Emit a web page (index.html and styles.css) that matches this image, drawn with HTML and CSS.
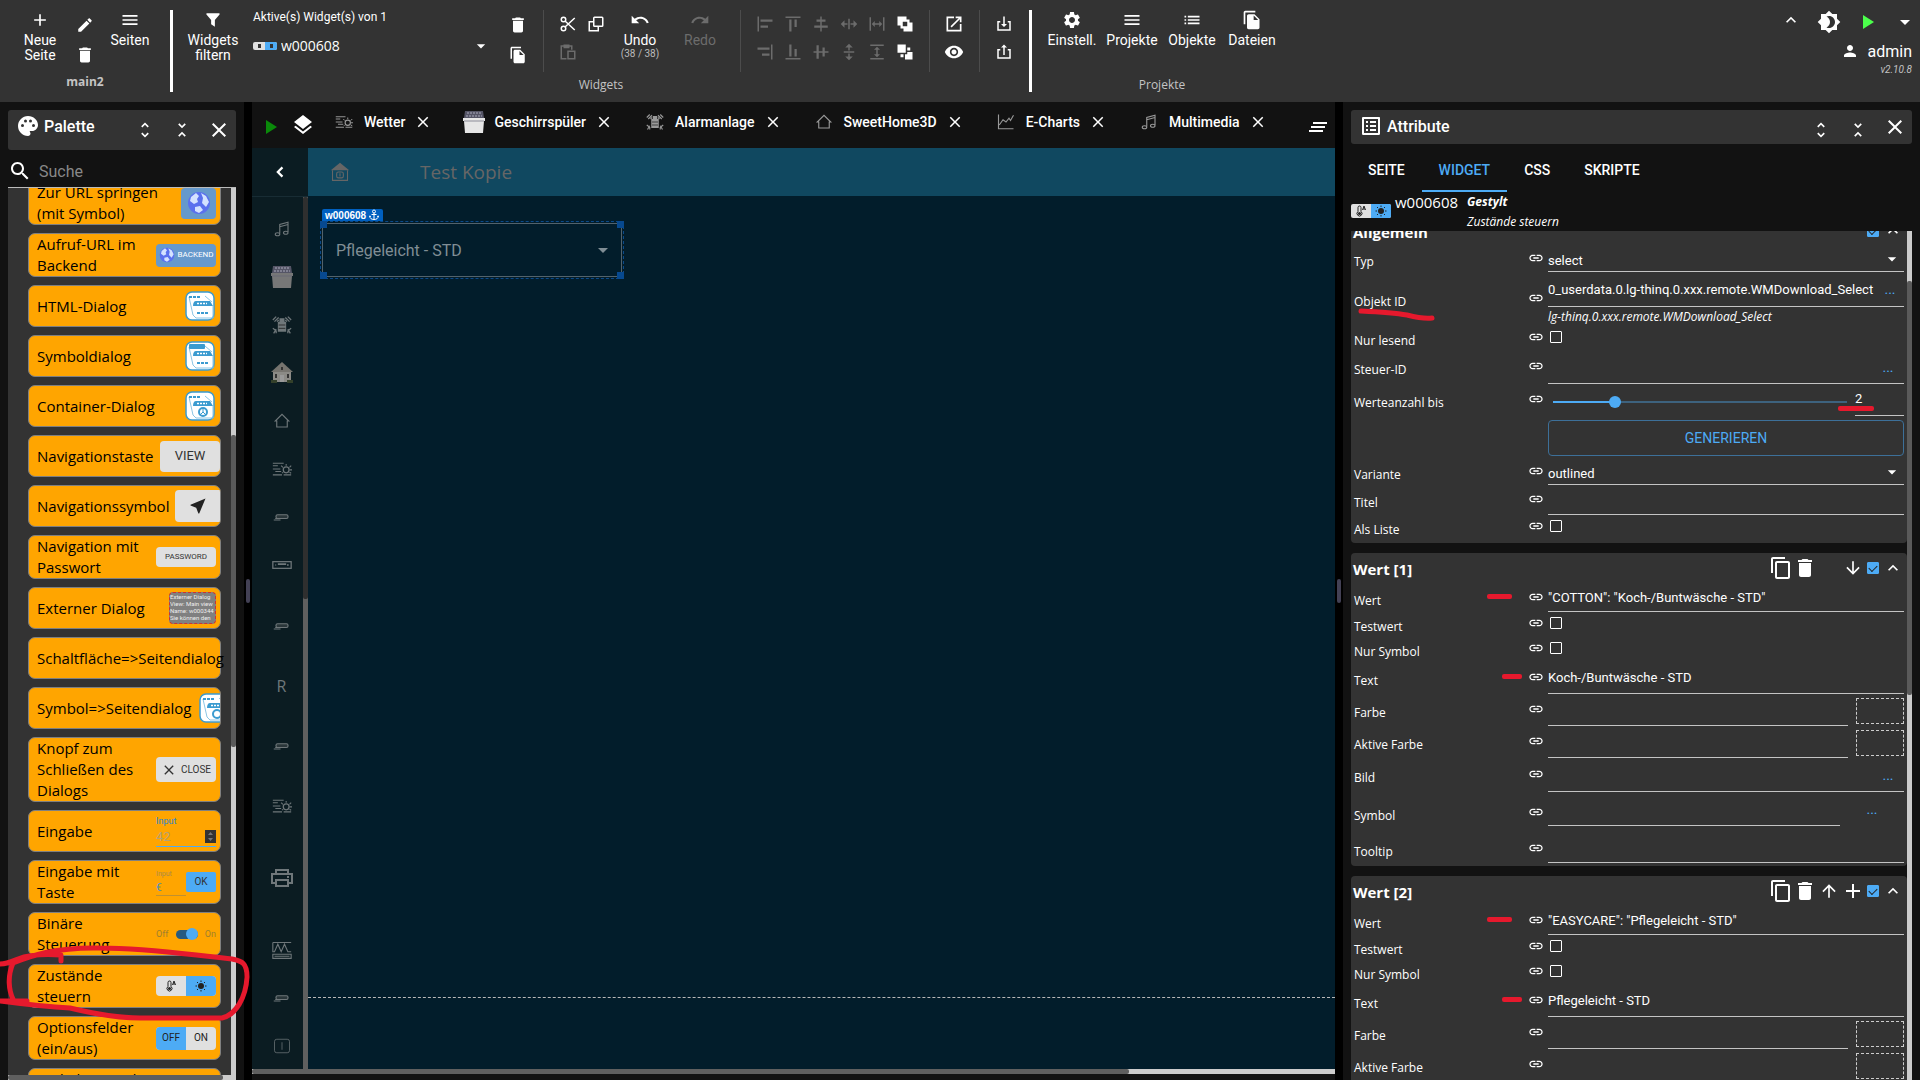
FILE: index.html
```html
<!DOCTYPE html>
<html lang="de">
<head>
<meta charset="utf-8">
<title>main2 – Editor</title>
<link rel="stylesheet" href="styles.css">
</head>
<body>
<svg class="defs" aria-hidden="true">
  <symbol id="add" viewBox="0 0 24 24"><path d="M19 13h-6v6h-2v-6H5v-2h6V5h2v6h6v2z"/></symbol>
  <symbol id="edit" viewBox="0 0 24 24"><path d="M3 17.25V21h3.75L17.81 9.94l-3.75-3.75L3 17.25zM20.71 7.04c.39-.39.39-1.02 0-1.41l-2.34-2.34c-.39-.39-1.02-.39-1.41 0l-1.83 1.83 3.75 3.75 1.83-1.83z"/></symbol>
  <symbol id="delete" viewBox="0 0 24 24"><path d="M6 19c0 1.1.9 2 2 2h8c1.1 0 2-.9 2-2V7H6v12zM19 4h-3.500l-1-1h-5l-1 1H5v2h14V4z"/></symbol>
  <symbol id="menu" viewBox="0 0 24 24"><path d="M3 18h18v-2H3v2zm0-5h18v-2H3v2zm0-7v2h18V6H3z"/></symbol>
  <symbol id="filter" viewBox="0 0 24 24"><path d="M4 3h16c1 0 1.300 1 .700 1.700L14.500 12v9l-5-3.500V12L3.300 4.700C2.700 4 3 3 4 3z"/></symbol>
  <symbol id="files" viewBox="0 0 24 24"><path d="M16 1H4c-1.100 0-2 .900-2 2v14h2V3h12V1zm-1 4l6 6v10c0 1.100-.900 2-2 2H7.990C6.890 23 6 22.100 6 21l.010-14c0-1.100.890-2 1.990-2h7zm-1 7h5.500L14 6.500V12z"/></symbol>
  <symbol id="copy" viewBox="0 0 24 24"><path d="M16 1H4c-1.100 0-2 .900-2 2v14h2V3h12V1zm3 4H8c-1.100 0-2 .900-2 2v14c0 1.100.900 2 2 2h11c1.100 0 2-.900 2-2V7c0-1.100-.900-2-2-2zm0 16H8V7h11v14z"/></symbol>
  <symbol id="cut" viewBox="0 0 24 24"><g fill="none" stroke="currentColor" stroke-width="2"><circle cx="6" cy="6" r="3"/><circle cx="6" cy="18" r="3"/><path d="M8 8l13 12M8 16L21 4"/></g></symbol>
  <symbol id="dup" viewBox="0 0 24 24"><g fill="none" stroke="currentColor" stroke-width="2"><rect x="9" y="3" width="12" height="12" rx="1"/><path d="M9 9H3v12h12v-6"/></g></symbol>
  <symbol id="paste" viewBox="0 0 24 24"><g fill="none" stroke="currentColor" stroke-width="2"><path d="M10 21H3V4h14v5"/><rect x="12" y="11" width="9" height="10"/></g><path d="M6 2h8v5H6z"/></symbol>
  <symbol id="undo" viewBox="0 0 24 24"><path d="M12.500 8c-2.650 0-5.050.990-6.900 2.600L2 7v9h9l-3.620-3.620c1.390-1.160 3.160-1.880 5.120-1.880 3.540 0 6.550 2.310 7.600 5.500l2.370-.780C21.080 11.030 17.150 8 12.500 8z"/></symbol>
  <symbol id="redo" viewBox="0 0 24 24"><path d="M18.400 10.600C16.550 8.990 14.150 8 11.500 8c-4.650 0-8.580 3.030-9.960 7.220L3.900 16c1.050-3.190 4.050-5.500 7.600-5.500 1.950 0 3.730.720 5.120 1.880L13 16h9V7l-3.600 3.600z"/></symbol>
  <symbol id="al-left" viewBox="0 0 24 24"><path d="M2 2h2v20H2zM6 6h16v3H6zM6 14h10v3H6z"/></symbol>
  <symbol id="al-right" viewBox="0 0 24 24"><path d="M20 2h2v20h-2zM2 6h16v3H2zM8 14h10v3H8z"/></symbol>
  <symbol id="al-top" viewBox="0 0 24 24"><path d="M2 2h20v2H2zM7 6h3v16H7zM14 6h3v10h-3z"/></symbol>
  <symbol id="al-bottom" viewBox="0 0 24 24"><path d="M2 20h20v2H2zM7 2h3v16H7zM14 8h3v10h-3z"/></symbol>
  <symbol id="al-mid" viewBox="0 0 24 24"><path d="M11 2h2v4h5v3h-5v5h8v3h-8v5h-2v-5H3v-3h8V9H6V6h5z"/></symbol>
  <symbol id="al-cen" viewBox="0 0 24 24"><path d="M2 11h4V3h3v8h5V6h3v5h5v2h-5v5h-3v-5H9v8H6v-8H2z"/></symbol>
  <symbol id="same-w" viewBox="0 0 24 24"><path d="M11 5h2v14h-2zM1 12l5-5v4h4v2H6v4zM23 12l-5-5v4h-4v2h4v4z"/></symbol>
  <symbol id="same-h" viewBox="0 0 24 24"><path d="M5 11h14v2H5zM12 1l5 5h-4v4h-2V6H7zM12 23l5-5h-4v-4h-2v4H7z"/></symbol>
  <symbol id="dist-w" viewBox="0 0 24 24"><path d="M2 3h2v18H2zM20 3h2v18h-2zM5 12l4-4v3h6V8l4 4-4 4v-3H9v3z"/></symbol>
  <symbol id="dist-h" viewBox="0 0 24 24"><path d="M3 2h18v2H3zM3 20h18v2H3zM12 5l4 4h-3v6h3l-4 4-4-4h3V9H8z"/></symbol>
  <symbol id="front" viewBox="0 0 24 24"><path d="M2 2h12v4h4v4h4v12H10v-4H6v-4H2zM9 9v6h6V9z" fill-rule="evenodd"/></symbol>
  <symbol id="back" viewBox="0 0 24 24"><path d="M2 2h11v11H2zM15 6h4v4h-4zM6 15h4v4H6zM12 15h3v-3h7v10H12z"/></symbol>
  <symbol id="open" viewBox="0 0 24 24"><path d="M19 19H5V5h7V3H3v18h18v-9h-2zM14 3v2h3.600l-9.800 9.800 1.400 1.400L19 6.400V10h2V3z"/></symbol>
  <symbol id="eye" viewBox="0 0 24 24"><path d="M12 4.500C7 4.500 2.730 7.610 1 12c1.730 4.390 6 7.500 11 7.500s9.270-3.110 11-7.500c-1.730-4.390-6-7.500-11-7.500zM12 17c-2.760 0-5-2.240-5-5s2.240-5 5-5 5 2.240 5 5-2.240 5-5 5zm0-8c-1.660 0-3 1.340-3 3s1.340 3 3 3 3-1.340 3-3-1.340-3-3-3z"/></symbol>
  <symbol id="import" viewBox="0 0 24 24"><path d="M7 8H3v13h18V8h-4v2h2v9H5v-9h2zM11 2h2v10h3l-4 4-4-4h3z"/></symbol>
  <symbol id="export" viewBox="0 0 24 24"><path d="M7 8H3v13h18V8h-4v2h2v9H5v-9h2zM11 16h2V6h3l-4-4-4 4h3z"/></symbol>
  <symbol id="gear" viewBox="0 0 24 24"><path d="M19.140 12.940c.040-.300.060-.610.060-.940 0-.320-.020-.640-.070-.940l2.030-1.580c.180-.140.230-.410.120-.610l-1.920-3.320c-.120-.220-.370-.290-.590-.220l-2.390.960c-.500-.380-1.030-.700-1.620-.940L14.400 2.810c-.040-.240-.240-.410-.480-.410h-3.840c-.240 0-.430.170-.470.410L9.250 5.350c-.590.240-1.130.570-1.620.940L5.240 5.330c-.220-.080-.470 0-.590.220L2.740 8.870c-.120.210-.080.470.120.610l2.030 1.580c-.050.300-.090.630-.090.940s.020.640.070.940l-2.030 1.580c-.180.140-.230.410-.120.610l1.920 3.320c.120.220.370.290.590.220l2.390-.960c.500.380 1.030.700 1.620.940l.360 2.540c.050.240.240.410.480.410h3.840c.240 0 .440-.170.470-.410l.360-2.540c.590-.240 1.130-.560 1.620-.940l2.390.960c.220.080.470 0 .590-.220l1.920-3.320c.120-.220.070-.470-.120-.610l-2.010-1.580zM12 15.600c-1.980 0-3.600-1.620-3.600-3.600s1.620-3.600 3.600-3.600 3.600 1.620 3.600 3.600-1.620 3.600-3.600 3.600z"/></symbol>
  <symbol id="list" viewBox="0 0 24 24"><path d="M3 13h2v-2H3v2zm0 4h2v-2H3v2zm0-8h2V7H3v2zm4 4h14v-2H7v2zm0 4h14v-2H7v2zM7 7v2h14V7H7z"/></symbol>
  <symbol id="up" viewBox="0 0 24 24"><path d="M12 8l-6 6 1.410 1.410L12 10.830l4.590 4.580L18 14z"/></symbol>
  <symbol id="left" viewBox="0 0 24 24"><path d="M15.900 7.400L14 5.500 7.500 12l6.500 6.500 1.900-1.900L11.300 12z"/></symbol>
  <symbol id="theme" viewBox="0 0 24 24"><path d="M20 8.690V4h-4.690L12 .690 8.690 4H4v4.690L.690 12 4 15.310V20h4.690L12 23.310 15.310 20H20v-4.690L23.310 12 20 8.690zM12 18c-.890 0-1.740-.200-2.500-.550C11.560 16.500 13 14.420 13 12s-1.440-4.500-3.500-5.450C10.260 6.200 11.110 6 12 6c3.310 0 6 2.690 6 6s-2.690 6-6 6z"/></symbol>
  <symbol id="play" viewBox="0 0 24 24"><path d="M8 5v14l11-7z"/></symbol>
  <symbol id="drop" viewBox="0 0 24 24"><path d="M7 10l5 5 5-5z"/></symbol>
  <symbol id="person" viewBox="0 0 24 24"><path d="M12 12c2.210 0 4-1.790 4-4s-1.790-4-4-4-4 1.790-4 4 1.790 4 4 4zm0 2c-2.670 0-8 1.340-8 4v2h16v-2c0-2.660-5.330-4-8-4z"/></symbol>
  <symbol id="palette" viewBox="0 0 24 24"><path d="M12 2C6.500 2 2 6.500 2 12s4.500 10 10 10c1.400 0 2.500-1.100 2.500-2.500 0-.6-.2-1.200-.6-1.600-.1-.1-.2-.2-.2-.4 0-.3.200-.5.500-.5H16c3.300 0 6-2.700 6-6C22 6 17.500 2 12 2zM6.500 13a1.500 1.500 0 110-3 1.500 1.500 0 010 3zm3-4.500a1.500 1.500 0 110-3 1.500 1.500 0 010 3zm5 0a1.500 1.500 0 110-3 1.500 1.500 0 010 3zm3 4.500a1.500 1.500 0 110-3 1.500 1.500 0 010 3z"/></symbol>
  <symbol id="unfold" viewBox="0 0 24 24"><path d="M12 5.830L15.170 9l1.410-1.410L12 3 7.410 7.590 8.830 9 12 5.830zm0 12.340L8.830 15l-1.410 1.410L12 21l4.590-4.590L15.170 15 12 18.170z"/></symbol>
  <symbol id="fold" viewBox="0 0 24 24"><path d="M7.410 18.590L8.830 20 12 16.830 15.170 20l1.410-1.410L12 14l-4.590 4.590zm9.180-13.180L15.170 4 12 7.170 8.830 4 7.410 5.410 12 10l4.590-4.590z"/></symbol>
  <symbol id="close" viewBox="0 0 24 24"><path d="M19 6.410L17.590 5 12 10.590 6.410 5 5 6.410 10.590 12 5 17.590 6.410 19 12 13.410 17.590 19 19 17.590 13.410 12z"/></symbol>
  <symbol id="search" viewBox="0 0 24 24"><path d="M15.500 14h-.790l-.280-.270C15.410 12.590 16 11.110 16 9.500 16 5.910 13.090 3 9.500 3S3 5.910 3 9.500 5.910 16 9.500 16c1.610 0 3.090-.590 4.230-1.570l.270.280v.790l5 4.990L20.490 19l-4.990-5zm-6 0C7.010 14 5 11.990 5 9.500S7.010 5 9.500 5 14 7.010 14 9.500 11.990 14 9.500 14z"/></symbol>
  <symbol id="layers" viewBox="0 0 24 24"><path d="M12 18.540l-7.370-5.730L3 14.070l9 7 9-7-1.630-1.270L12 18.540zM12 16l7.360-5.730L21 9l-9-7-9 7 1.630 1.270L12 16z"/></symbol>
  <symbol id="clear" viewBox="0 0 24 24"><path d="M5 13h14v-2H5v2zm-2 4h14v-2H3v2zM7 7v2h14V7H7z"/></symbol>
  <symbol id="listalt" viewBox="0 0 24 24"><path d="M19 5v14H5V5h14m1.100-2H3.900c-.500 0-.900.400-.900.900v16.200c0 .400.400.900.900.900h16.200c.400 0 .900-.500.900-.900V3.900c0-.500-.500-.900-.900-.900zM11 7h6v2h-6V7zm0 4h6v2h-6v-2zm0 4h6v2h-6zM7 7h2v2H7zm0 4h2v2H7zm0 4h2v2H7z"/></symbol>
  <symbol id="link" viewBox="0 0 24 24"><path d="M3.900 12c0-1.710 1.390-3.100 3.100-3.100h4V7H7c-2.760 0-5 2.240-5 5s2.240 5 5 5h4v-1.900H7c-1.710 0-3.100-1.390-3.100-3.100zM8 13h8v-2H8v2zm9-6h-4v1.900h4c1.710 0 3.100 1.390 3.100 3.100s-1.390 3.100-3.100 3.100h-4V17h4c2.760 0 5-2.240 5-5s-2.240-5-5-5z"/></symbol>
  <symbol id="arr-down" viewBox="0 0 24 24"><path d="M20 12l-1.400-1.400L13 16.200V4h-2v12.200l-5.600-5.600L4 12l8 8z"/></symbol>
  <symbol id="arr-up" viewBox="0 0 24 24"><path d="M4 12l1.400 1.400L11 7.800V20h2V7.800l5.600 5.600L20 12l-8-8z"/></symbol>
  <symbol id="nav" viewBox="0 0 24 24"><path d="M21 3L3 10.530v.980l6.840 2.650L12.480 21h.980L21 3z"/></symbol>
  <symbol id="weather" viewBox="0 0 24 24"><g fill="none" stroke="currentColor"><path d="M1 5h13M1 8h6M1 12h9M4 15h7M1 19h11M14 19h9" stroke-width="1.300"/><circle cx="17" cy="13" r="3.500" stroke-width="1.500"/><path d="M17 6v2M11 8l2 2M23 8l-2 2M21 13h3M12 17l1-1M21 16l2 1" stroke-width="1.300"/></g></symbol>
  <symbol id="washer" viewBox="0 0 24 24"><path d="M3 1h18l1 7H2z" fill="#556" /><path d="M5 3h14M4 6h16" stroke="#aab" fill="none" stroke-dasharray="2 1"/><path d="M1 8h22v3H1zM2 11h20l-1 12H3z"/><path d="M2 11h20" stroke="#667" stroke-width=".7"/></symbol>
  <symbol id="alarm" viewBox="0 0 24 24"><path d="M9 4h6v4h2v12H7V8h2z"/><path d="M8 12h8M8 16h8" stroke="#222"/><g fill="none" stroke="currentColor" stroke-width="1.500"><path d="M1 6l4-4M3 8l5-5M6 8l2-2M23 6l-4-4M21 8l-5-5M18 8l-2-2M1 16l4 3v3M2 22l3-5M23 16l-4 3v3M22 22l-3-5"/></g></symbol>
  <symbol id="home" viewBox="0 0 24 24"><path d="M5 20V12H3l9-9 9 9h-2v8z" fill="none" stroke="currentColor" stroke-width="1.500"/></symbol>
  <symbol id="villa" viewBox="0 0 24 24"><path d="M12 1l11 10H1z" fill="#76746f"/><path d="M3 11h18v10H3z" fill="#8b8a86"/><path d="M10 14h4v7h-4z" fill="#999"/><path d="M5 13h2v4H5zM17 13h2v4h-2zM11 6h2v3h-2z" fill="#333"/><path d="M1 19h6v3H1zM17 19h6v3h-6z" fill="#34402a"/></symbol>
  <symbol id="homebtn" viewBox="0 0 24 24"><path d="M12 1L1 10h22z"/><g fill="none" stroke="currentColor" stroke-width="1.300"><path d="M3 10v12h18V10"/><rect x="8" y="12" width="8" height="7" rx="2"/><path d="M12 13.500v4"/></g></symbol>
  <symbol id="chart" viewBox="0 0 24 24"><path d="M2 2v19h20M3 16l5-7 4 3 4-5 2 3 4-7" fill="none" stroke="currentColor" stroke-width="1.500"/></symbol>
  <symbol id="music" viewBox="0 0 24 24"><path d="M9 18V6l11-3v13M9 9l11-3" fill="none" stroke="currentColor" stroke-width="1.500"/><ellipse cx="6" cy="19" rx="3" ry="2" fill="none" stroke="currentColor" stroke-width="1.500"/><ellipse cx="17" cy="17" rx="3" ry="2" fill="none" stroke="currentColor" stroke-width="1.500"/></symbol>
  <symbol id="stick" viewBox="0 0 24 24"><rect x="4" y="9" width="16" height="5" rx="2" fill="#2a363a" stroke="currentColor" stroke-width="1.500"/><path d="M1 16h9M3 14h5" stroke="currentColor" stroke-width="1.500"/></symbol>
  <symbol id="device" viewBox="0 0 24 24"><rect x="1" y="8" width="22" height="8" fill="none" stroke="currentColor" stroke-width="1.500"/><path d="M7 11h10M4 12h1M18 12h2" stroke="currentColor" stroke-width="2"/></symbol>
  <symbol id="printer" viewBox="0 0 24 24"><g fill="none" stroke="currentColor" stroke-width="2"><path d="M6 8V4h12v4M6 17H2V8h20v9h-4"/><rect x="6" y="14" width="12" height="6"/></g><path d="M17 10h2v2h-2z"/></symbol>
  <symbol id="wave" viewBox="0 0 24 24"><path d="M1 3h22M1 3v11h2l4-9 4 9 4-9 4 9h4M1 17h22v5H1zM3 19.500h18" fill="none" stroke="currentColor" stroke-width="1.300"/></symbol>
  <symbol id="switch" viewBox="0 0 24 24"><rect x="2" y="3" width="20" height="18" rx="3" fill="none" stroke="currentColor"/><path d="M12 7v10" stroke="currentColor"/></symbol>
  <symbol id="anchor" viewBox="0 0 24 24"><path d="M12 8v13M7 11h10M3 14c1 5 4 7 9 7s8-2 9-7l-3 1M3 14l3 1" fill="none" stroke="currentColor" stroke-width="2"/><circle cx="12" cy="5" r="3" fill="none" stroke="currentColor" stroke-width="2"/></symbol>
  <symbol id="globe" viewBox="0 0 24 24"><circle cx="12" cy="12" r="11" fill="#5a70ee"/><path d="M4 6l5-4 3 3-2 3 1 3-4 2-4-3zM14 2l5 3 3 6-3 5-4-4 1-5zM8 16l5-1 3 4-4 3-4-2z" fill="#d3e2ff"/></symbol>
  <symbol id="sun" viewBox="0 0 24 24"><circle cx="12" cy="12" r="6"/><path d="M12 1v3M12 20v3M1 12h3M20 12h3M4 4l2 2M18 18l2 2M20 4l-2 2M4 20l2-2" stroke="currentColor" stroke-width="2"/></symbol>
  <symbol id="thermo" viewBox="0 0 24 24"><path d="M6 13V5a3 3 0 016 0v8a5 5 0 11-6 0z" fill="none" stroke="currentColor" stroke-width="2"/><circle cx="9" cy="17" r="3"/><path d="M15 10l3-8 3 8M16 8h4" fill="none" stroke="currentColor" stroke-width="2"/></symbol>
  <symbol id="dialog" viewBox="0 0 30 30"><rect x="1" y="1" width="28" height="28" rx="6" fill="#fff" stroke="#3b9bd0" stroke-width="1.500"/><path d="M4 6l4 18 3 3h17V15M20 5l7 6" fill="none" stroke="#8cc5e4"/><path d="M4 6h12" stroke="#3b9bd0" stroke-width="2" stroke-dasharray="3 1"/><path d="M8 15c0-3 1-5 3-5h14l3 5z" fill="#3b9bd0"/><path d="M12 12.500h10" stroke="#fff" stroke-width="1.500" stroke-dasharray="2 1"/></symbol>
</svg>

<header class="toolbar">
  <section class="tb-section tb-pages">
    <div class="tb-body">
      <button class="tb-btn"><svg class="i20"><use href="#add"/></svg>Neue Seite</button>
      <div class="tb-stack"><button class="ic"><svg class="i18"><use href="#edit"/></svg></button><button class="ic"><svg class="i20"><use href="#delete"/></svg></button></div>
      <button class="tb-btn"><svg class="i20"><use href="#menu"/></svg>Seiten</button>
    </div>
    <div class="tb-caption strong">main2</div>
  </section>
  <section class="tb-section">
    <div class="tb-body tb-widgets">
      <button class="tb-btn wide"><svg class="i18"><use href="#filter"/></svg>Widgets filtern</button>
      <div class="active">
        <label for="active-widget">Aktive(s) Widget(s) von 1</label>
        <div class="active-select"><span class="chip small"><i></i><i></i></span>
          <select id="active-widget"><option>w000608</option></select><svg class="i20"><use href="#drop"/></svg></div>
      </div>
      <div class="tb-stack"><button class="ic"><svg class="i20"><use href="#delete"/></svg></button><button class="ic"><svg class="i18"><use href="#files"/></svg></button></div>
      <div class="tb-grid two bordered">
        <button class="ic"><svg class="i18"><use href="#cut"/></svg></button><button class="ic"><svg class="i18"><use href="#dup"/></svg></button>
        <button class="ic off" disabled><svg class="i18"><use href="#paste"/></svg></button>
      </div>
      <button class="tb-btn undo"><svg class="i20"><use href="#undo"/></svg>Undo<small>(38 / 38)</small></button>
      <button class="tb-btn redo" disabled><svg class="i20"><use href="#redo"/></svg>Redo</button>
      <div class="tb-grid six bordered">
        <button class="ic off"><svg class="i18"><use href="#al-left"/></svg></button><button class="ic off"><svg class="i18"><use href="#al-top"/></svg></button><button class="ic off"><svg class="i18"><use href="#al-mid"/></svg></button><button class="ic off"><svg class="i18"><use href="#same-w"/></svg></button><button class="ic off"><svg class="i18"><use href="#dist-w"/></svg></button><button class="ic"><svg class="i18"><use href="#front"/></svg></button>
        <button class="ic off"><svg class="i18"><use href="#al-right"/></svg></button><button class="ic off"><svg class="i18"><use href="#al-bottom"/></svg></button><button class="ic off"><svg class="i18"><use href="#al-cen"/></svg></button><button class="ic off"><svg class="i18"><use href="#same-h"/></svg></button><button class="ic off"><svg class="i18"><use href="#dist-h"/></svg></button><button class="ic"><svg class="i18"><use href="#back"/></svg></button>
      </div>
      <div class="tb-grid one bordered"><button class="ic"><svg class="i20"><use href="#open"/></svg></button><button class="ic"><svg class="i20"><use href="#eye"/></svg></button></div>
      <div class="tb-grid one bordered"><button class="ic"><svg class="i18"><use href="#import"/></svg></button><button class="ic"><svg class="i18"><use href="#export"/></svg></button></div>
    </div>
    <div class="tb-caption">Widgets</div>
  </section>
  <section class="tb-section tb-projects">
    <div class="tb-body">
      <button class="tb-btn"><svg class="i20"><use href="#gear"/></svg>Einstell.</button>
      <button class="tb-btn"><svg class="i20"><use href="#menu"/></svg>Projekte</button>
      <button class="tb-btn"><svg class="i20"><use href="#list"/></svg>Objekte</button>
      <button class="tb-btn"><svg class="i20"><use href="#files"/></svg>Dateien</button>
    </div>
    <div class="tb-caption">Projekte</div>
  </section>
  <div class="tb-user">
    <div class="tb-user-icons"><button class="ic"><svg class="i20"><use href="#up"/></svg></button><button class="ic"><svg class="i24"><use href="#theme"/></svg></button><button class="ic run"><svg class="i24"><use href="#play"/></svg></button><button class="ic"><svg class="i24"><use href="#drop"/></svg></button></div>
    <div class="tb-name"><svg class="i18"><use href="#person"/></svg>admin</div>
    <div class="tb-version">v2.10.8</div>
  </div>
</header>

<main class="work">
  <aside class="palette">
    <div class="panel-head"><svg class="i24"><use href="#palette"/></svg><h2>Palette</h2>
      <button class="ic"><svg class="i20"><use href="#unfold"/></svg></button><button class="ic"><svg class="i20"><use href="#fold"/></svg></button><button class="ic"><svg class="i24"><use href="#close"/></svg></button></div>
    <div class="search"><svg class="i24"><use href="#search"/></svg><input type="text" placeholder="Suche" aria-label="Suche"></div>
    <div class="pal-view">
      <ul class="pal-list">
        <li><span>Zur URL springen<br>(mit Symbol)</span><b class="pv blue sq"><svg class="i24"><use href="#globe"/></svg></b></li>
        <li><span>Aufruf-URL im<br>Backend</span><b class="pv blue h23"><svg class="i16"><use href="#globe"/></svg>BACKEND</b></li>
        <li><span>HTML-Dialog</span><svg class="dlg" viewBox="0 0 30 30"><use href="#dialog"/><path d="M12 22h11" stroke="#3b9bd0" stroke-width="2" stroke-dasharray="3 1"/></svg></li>
        <li><span>Symboldialog</span><svg class="dlg" viewBox="0 0 30 30"><use href="#dialog"/><rect x="4" y="3" width="16" height="5" rx="1" fill="#3b9bd0"/><path d="M12 22h11" stroke="#3b9bd0" stroke-width="2" stroke-dasharray="3 1"/></svg></li>
        <li><span>Container-Dialog</span><svg class="dlg" viewBox="0 0 30 30"><use href="#dialog"/><circle cx="18" cy="21" r="4" fill="none" stroke="#3b9bd0" stroke-width="2"/><path d="M18 17v4l-3 3M18 21l3 3" stroke="#3b9bd0" fill="none"/></svg></li>
        <li><span>Navigationstaste</span><b class="pv view">VIEW</b></li>
        <li class="clip"><span>Navigationssymbol</span><b class="pv nav"><svg class="i20"><use href="#nav"/></svg></b></li>
        <li><span>Navigation mit<br>Passwort</span><b class="pv h20 tiny">PASSWORD</b></li>
        <li><span>Externer Dialog</span><b class="pv ext"><em>Externer Dialog</em><em>View: Main view</em><em>Name: w000344</em><em>Sie können den</em></b></li>
        <li><span>Schaltfläche=&gt;Seitendialog</span></li>
        <li class="clip"><span>Symbol=&gt;Seitendialog</span><svg class="dlg cut" viewBox="0 0 30 30"><use href="#dialog"/><circle cx="18" cy="21" r="4" fill="none" stroke="#3b9bd0" stroke-width="2"/></svg></li>
        <li><span>Knopf zum<br>Schließen des<br>Dialogs</span><b class="pv h25"><svg class="i16"><use href="#close"/></svg>CLOSE</b></li>
        <li><span>Eingabe</span><b class="inp"><em>Input</em><u>42<svg class="spin" viewBox="0 0 11 13"><path fill="#333" d="M0 0h11v13H0z"/><path fill="#777" d="M3 5l2.500-3L8 5zM3 8l2.500 3L8 8z"/></svg></u></b></li>
        <li><span>Eingabe mit<br>Taste</span><b class="inp two"><em>Input</em><u>€</u></b><b class="pv ok">OK</b></li>
        <li><span>Binäre<br>Steuerung</span><b class="tog">Off<i></i>On</b></li>
        <li><span>Zustände<br>steuern</span><b class="duo h20"><i><svg class="i12"><use href="#thermo"/></svg></i><i class="on"><svg class="i12"><use href="#sun"/></svg></i></b></li>
        <li><span>Optionsfelder<br>(ein/aus)</span><b class="duo h23"><i class="on">OFF</i><i>ON</i></b></li>
        <li><span>Radioliste und<br>Werte</span></li>
      </ul>
      <div class="vbar pal-bar"><i></i></div>
    </div>
    <div class="hbar pal-hbar"><i></i></div>
    <svg class="ring" viewBox="0 0 252 90"><path d="M61 14V8C45 7 28 8 18 12S6 17 0 17M27 54H0C30 58 50 60 70 61 95 67 120 71 140 71H222C236 68 246 50 247 30 247 16 242 14 232 12 190 8 150 1 100 1 55 0 30 9 13 16 7 30 9 44 13 52"/></svg>
  </aside>
  <div class="split"><i></i></div>

  <section class="center">
    <nav class="tabs">
      <button class="ic tab-run"><svg class="i24"><use href="#play"/></svg></button><button class="ic tab-layer"><svg class="i24"><use href="#layers"/></svg></button>
      <div class="tab"><svg class="i18 dim"><use href="#weather"/></svg><a href="#wetter">Wetter</a><button class="ic"><svg class="i18"><use href="#close"/></svg></button></div>
      <div class="tab"><svg class="i24 pale"><use href="#washer"/></svg><a href="#spueler">Geschirrspüler</a><button class="ic"><svg class="i18"><use href="#close"/></svg></button></div>
      <div class="tab"><svg class="i18 dim"><use href="#alarm"/></svg><a href="#alarmanlage">Alarmanlage</a><button class="ic"><svg class="i18"><use href="#close"/></svg></button></div>
      <div class="tab"><svg class="i18 dim"><use href="#home"/></svg><a href="#sweethome">SweetHome3D</a><button class="ic"><svg class="i18"><use href="#close"/></svg></button></div>
      <div class="tab"><svg class="i18 dim"><use href="#chart"/></svg><a href="#echarts">E-Charts</a><button class="ic"><svg class="i18"><use href="#close"/></svg></button></div>
      <div class="tab"><svg class="i18 dim"><use href="#music"/></svg><a href="#multimedia">Multimedia</a><button class="ic"><svg class="i18"><use href="#close"/></svg></button></div>
      <button class="ic tab-more"><svg class="i24"><use href="#clear"/></svg></button>
    </nav>
    <div class="stage">
      <div class="rail">
        <button class="ic rail-head"><svg class="i20"><use href="#left"/></svg></button>
        <div class="rail-body">
          <ul class="rail-list">
            <li><svg class="i18"><use href="#music"/></svg></li><li><svg class="i24 grey"><use href="#washer"/></svg></li><li><svg class="i20"><use href="#alarm"/></svg></li><li><svg class="i24"><use href="#villa"/></svg></li><li><svg class="i18"><use href="#home"/></svg></li><li><svg class="i20"><use href="#weather"/></svg></li><li><svg class="i18"><use href="#stick"/></svg></li><li class="gap"><svg class="i20"><use href="#device"/></svg></li>
            <li class="t60"><svg class="i18"><use href="#stick"/></svg></li><li class="t60 letter">R</li><li class="t60"><svg class="i18"><use href="#stick"/></svg></li><li class="t60"><svg class="i20"><use href="#weather"/></svg></li><li class="t84"><svg class="i24"><use href="#printer"/></svg></li><li class="t60"><svg class="i20"><use href="#wave"/></svg></li><li class="t36"><svg class="i18"><use href="#stick"/></svg></li><li class="t60"><svg class="i18"><use href="#switch"/></svg></li>
          </ul>
          <div class="vbar rail-bar"><i></i></div>
        </div>
      </div>
      <div class="page">
        <div class="page-head"><svg class="i20"><use href="#homebtn"/></svg><h1>Test Kopie</h1></div>
        <div class="canvas">
          <div class="widget">
            <div class="tag">w000608 <svg class="i12"><use href="#anchor"/></svg></div>
            <div class="w-box"><select aria-label="w000608"><option>Pflegeleicht - STD</option></select><svg class="i24"><use href="#drop"/></svg></div>
            <i class="c tl"></i><i class="c tr"></i><i class="c bl"></i><i class="c br"></i>
          </div>
          <div class="limit"></div>
        </div>
      </div>
    </div>
    <div class="hbar stage-hbar"><i></i></div>
  </section>
  <div class="split"><i></i></div>

  <aside class="attrs">
    <div class="panel-head attr-head"><svg class="i24"><use href="#listalt"/></svg><h2>Attribute</h2>
      <button class="ic"><svg class="i20"><use href="#unfold"/></svg></button><button class="ic"><svg class="i20"><use href="#fold"/></svg></button><button class="ic"><svg class="i24"><use href="#close"/></svg></button></div>
    <nav class="atabs"><button>SEITE</button><button class="sel">WIDGET</button><button>CSS</button><button>SKRIPTE</button></nav>
    <div class="info"><span class="chip"><i><svg class="i12"><use href="#thermo"/></svg></i><i><svg class="i12"><use href="#sun"/></svg></i></span><span class="info-id">w000608</span><span class="info-type"><b>Gestylt</b><span>Zustände steuern</span></span></div>
    <div class="attr-view">
      <div class="groups">
        <section class="group first">
          <div class="g-head"><h3>Allgemein</h3><input type="checkbox" class="cb" checked aria-label="Allgemein"><button class="ic"><svg class="i20"><use href="#up"/></svg></button></div>
          <div class="row r25"><label for="typ">Typ</label><button class="lk"><svg class="i16"><use href="#link"/></svg></button><div class="field line"><select id="typ"><option>select</option></select><svg class="i20"><use href="#drop"/></svg></div></div>
          <div class="row r55"><label for="oid">Objekt ID</label><button class="lk"><svg class="i16"><use href="#link"/></svg></button><div class="stacked"><div class="field line"><input id="oid" type="text" value="0_userdata.0.lg-thinq.0.xxx.remote.WMDownload_Select"><button class="dots">...</button></div><p>lg-thinq.0.xxx.remote.WMDownload_Select</p></div><svg class="stroke-mark" viewBox="0 0 80 16"><path d="M4 4c20 1 34 2 46 4 12 3 18 4 25 3"/></svg></div>
          <div class="row r23"><label for="ro">Nur lesend</label><button class="lk"><svg class="i16"><use href="#link"/></svg></button><div class="field tick"><input type="checkbox" class="cb" id="ro"></div></div>
          <div class="row r34"><label for="sid">Steuer-ID</label><button class="lk"><svg class="i16"><use href="#link"/></svg></button><div class="field line"><input id="sid" type="text"><button class="dots">...</button></div></div>
          <div class="row r32"><label for="cnt">Werteanzahl bis</label><button class="lk"><svg class="i16"><use href="#link"/></svg></button><div class="field count"><input type="range" min="0" max="10" value="2" aria-label="Werteanzahl bis"><div class="line"><input id="cnt" type="text" value="2"></div></div><i class="mark m-count"></i></div>
          <div class="row r44"><span></span><span></span><button class="gen">GENERIEREN</button></div>
          <div class="row r25"><label for="var">Variante</label><button class="lk"><svg class="i16"><use href="#link"/></svg></button><div class="field line"><select id="var"><option>outlined</option></select><svg class="i20"><use href="#drop"/></svg></div></div>
          <div class="row r30"><label for="tit">Titel</label><button class="lk"><svg class="i16"><use href="#link"/></svg></button><div class="field line"><input id="tit" type="text"></div></div>
          <div class="row r25"><label for="lst">Als Liste</label><button class="lk"><svg class="i16"><use href="#link"/></svg></button><div class="field tick"><input type="checkbox" class="cb" id="lst"></div></div>
        </section>
        <section class="group">
          <div class="g-head"><h3>Wert [1]</h3><button class="ic"><svg class="i24"><use href="#copy"/></svg></button><button class="ic"><svg class="i24"><use href="#delete"/></svg></button><span class="ic"></span><button class="ic"><svg class="i20"><use href="#arr-down"/></svg></button><input type="checkbox" class="cb" checked aria-label="Wert [1]"><button class="ic"><svg class="i20"><use href="#up"/></svg></button></div>
          <div class="row r28"><label for="w1">Wert</label><button class="lk"><svg class="i16"><use href="#link"/></svg></button><div class="field line"><input id="w1" type="text" value="&quot;COTTON&quot;: &quot;Koch-/Buntwäsche - STD&quot;"></div><i class="mark m-value"></i></div>
          <div class="row r25"><label for="t1">Testwert</label><button class="lk"><svg class="i16"><use href="#link"/></svg></button><div class="field tick"><input type="checkbox" class="cb" id="t1"></div></div>
          <div class="row r25"><label for="s1">Nur Symbol</label><button class="lk"><svg class="i16"><use href="#link"/></svg></button><div class="field tick"><input type="checkbox" class="cb" id="s1"></div></div>
          <div class="row r32"><label for="x1">Text</label><button class="lk"><svg class="i16"><use href="#link"/></svg></button><div class="field line"><input id="x1" type="text" value="Koch-/Buntwäsche - STD"></div><i class="mark m-text"></i></div>
          <div class="row r32"><label for="f1">Farbe</label><button class="lk"><svg class="i16"><use href="#link"/></svg></button><div class="field color"><div class="line"><input id="f1" type="text"></div><button class="swatch" aria-label="Farbe"></button></div></div>
          <div class="row r32"><label for="a1">Aktive Farbe</label><button class="lk"><svg class="i16"><use href="#link"/></svg></button><div class="field color"><div class="line"><input id="a1" type="text"></div><button class="swatch" aria-label="Aktive Farbe"></button></div></div>
          <div class="row r34"><label for="b1">Bild</label><button class="lk"><svg class="i16"><use href="#link"/></svg></button><div class="field line"><input id="b1" type="text"><button class="dots">...</button></div></div>
          <div class="row r43"><label for="y1">Symbol</label><button class="lk"><svg class="i16"><use href="#link"/></svg></button><div class="field sym"><div class="line"><input id="y1" type="text"></div><button class="dots">...</button></div></div>
          <div class="row r28"><label for="o1">Tooltip</label><button class="lk"><svg class="i16"><use href="#link"/></svg></button><div class="field line"><input id="o1" type="text"></div></div>
        </section>
        <section class="group">
          <div class="g-head"><h3>Wert [2]</h3><button class="ic"><svg class="i24"><use href="#copy"/></svg></button><button class="ic"><svg class="i24"><use href="#delete"/></svg></button><button class="ic"><svg class="i20"><use href="#arr-up"/></svg></button><button class="ic"><svg class="i24"><use href="#add"/></svg></button><input type="checkbox" class="cb" checked aria-label="Wert [2]"><button class="ic"><svg class="i20"><use href="#up"/></svg></button></div>
          <div class="row r28"><label for="w2">Wert</label><button class="lk"><svg class="i16"><use href="#link"/></svg></button><div class="field line"><input id="w2" type="text" value="&quot;EASYCARE&quot;: &quot;Pflegeleicht - STD&quot;"></div><i class="mark m-value"></i></div>
          <div class="row r25"><label for="t2">Testwert</label><button class="lk"><svg class="i16"><use href="#link"/></svg></button><div class="field tick"><input type="checkbox" class="cb" id="t2"></div></div>
          <div class="row r25"><label for="s2">Nur Symbol</label><button class="lk"><svg class="i16"><use href="#link"/></svg></button><div class="field tick"><input type="checkbox" class="cb" id="s2"></div></div>
          <div class="row r32"><label for="x2">Text</label><button class="lk"><svg class="i16"><use href="#link"/></svg></button><div class="field line"><input id="x2" type="text" value="Pflegeleicht - STD"></div><i class="mark m-text"></i></div>
          <div class="row r32"><label for="f2">Farbe</label><button class="lk"><svg class="i16"><use href="#link"/></svg></button><div class="field color"><div class="line"><input id="f2" type="text"></div><button class="swatch" aria-label="Farbe"></button></div></div>
          <div class="row r32"><label for="a2">Aktive Farbe</label><button class="lk"><svg class="i16"><use href="#link"/></svg></button><div class="field color"><div class="line"><input id="a2" type="text"></div><button class="swatch" aria-label="Aktive Farbe"></button></div></div>
        </section>
      </div>
      <div class="vbar attr-bar"><i></i></div>
    </div>
  </aside>
</main>
</body>
</html>
```

FILE: styles.css
```css
* { box-sizing: border-box; }
body {
  margin: 0; height: 100vh; overflow: hidden; display: flex; flex-direction: column;
  background: #000; color: #fff; font-family: Roboto, sans-serif; font-size: 14px;
}
.defs { display: none; }
svg { fill: currentColor; flex: none; display: block; }
.i12 { width: 12px; height: 12px; }
.i16 { width: 16px; height: 16px; }
.i18 { width: 18px; height: 18px; }
.i20 { width: 20px; height: 20px; }
.i24 { width: 24px; height: 24px; }
button, input, select { font: inherit; color: inherit; background: none; border: 0; padding: 0; margin: 0; }
input:focus { outline: 0; }
select { appearance: none; }
ul { list-style: none; margin: 0; padding: 0; }
h1, h2, h3, p { margin: 0; }
a { color: inherit; text-decoration: none; }
i, em { font-style: normal; }
.ic { display: grid; place-items: center; flex: none; }

/* toolbar */
.toolbar { display: flex; height: 102px; flex: none; padding-top: 10px; background: #333; }
.tb-section { height: 82px; border-right: 3px solid #fff; }
.tb-body { display: flex; height: 64px; }
.tb-pages .tb-body { gap: 4px; padding: 0 16px; }
.tb-projects { border: 0; padding: 0 10px; }
.tb-projects .tb-btn { width: 60px; }
.tb-btn { display: flex; flex-direction: column; align-items: center; width: 48px; line-height: 15px; text-align: center; }
.tb-btn svg { height: 20px; margin-bottom: 3px; }
.tb-btn small { font-size: 10px; line-height: 12px; color: #bbb; }
.tb-btn:disabled, .ic.off { color: #6c6c6c; }
.tb-btn.wide { width: 56px; }
.tb-widgets { padding-left: 12px; }
.tb-stack { width: 34px; display: grid; grid-template-rows: 30px 30px; }
.tb-caption { height: 22px; line-height: 22px; font-size: 12px; text-align: center; color: #c4c4c4; font-family: "Open Sans", sans-serif; }
.tb-caption.strong { font-weight: 700; line-height: 16px; }
.active { width: 236px; margin: 0 12px; font-size: 12px; line-height: 14px; }
.active-select { display: flex; align-items: center; height: 43px; font: 14px "Open Sans", sans-serif; }
.active-select select { flex: 1; padding-left: 4px; }
.active-select > svg { margin-right: -2px; }
.chip { display: flex; width: 40px; height: 14px; border-radius: 2px; overflow: hidden; background: #e0e0e0; color: #222; flex: none; }
.chip i { flex: 1; display: grid; place-items: center; }
.chip i + i { background: #4dabf5; }
.chip.small { width: 24px; height: 8px; }
.chip.small i::after { content: ""; width: 3px; height: 4px; background: #333; }
.tb-grid { display: grid; grid-template-rows: 28px 28px; height: 62px; }
.bordered { border-left: 1px solid #4c4c4c; padding: 0 10px; }
.two { grid-template-columns: 28px 28px; }
.tb-grid.two { margin-left: 8px; padding-right: 6px; }
.six { grid-template-columns: repeat(6, 28px); }
.one { grid-template-columns: 28px; padding-right: 11px; }
.tb-btn.redo { margin: 0 16px 0 12px; }
.tb-user { margin-left: auto; padding-right: 8px; text-align: right; }
.tb-user-icons { display: flex; height: 20px; gap: 14px; margin-right: -5px; }
.tb-user-icons .ic { width: 24px; }
.run { color: #4cff4c; }
.tb-name { display: flex; justify-content: flex-end; align-items: center; gap: 9px; height: 42px; font-size: 16px; }
.tb-version { font-size: 10px; line-height: 12px; font-style: italic; color: #c4c4c4; margin-top: -8px; }

/* frame */
.work { flex: 1; min-height: 0; display: flex; }
.split { width: 8px; flex: none; display: flex; justify-content: center; padding-top: 477px; }
.split i { width: 4px; height: 24px; border-radius: 2px; background: #434155; }
.vbar { flex: none; width: 5px; background: #ccc; }
.vbar i { display: block; background: #5a5a5a; border-radius: 2px; }
.hbar { height: 5px; flex: none; background: #ccc; }
.hbar i { display: block; height: 5px; background: #5f5f5f; border-radius: 2px; }
.panel-head { display: flex; align-items: center; flex: none; background: #333; border-radius: 3px; padding: 0 5px 0 8px; }
.panel-head h2 { flex: 1; padding-left: 4px; font-size: 16px; font-weight: 500; }
.panel-head .ic { width: 37px; }
.panel-head .ic:last-child { width: 24px; margin-left: 7px; }

/* palette */
.palette { position: relative; width: 244px; flex: none; display: flex; flex-direction: column; background: #121212; padding: 8px 8px 0; }
.palette .panel-head { height: 40px; }
.palette .panel-head h2, .palette .panel-head > svg { margin-bottom: 8px; }
.search { height: 38px; flex: none; display: flex; align-items: center; border-bottom: 1px solid #bbb; }
.search > svg { margin-top: 5px; }
.search input { width: 180px; padding: 6px 0 0 7px; font-size: 16px; }
.search input::placeholder { color: #888; opacity: 1; }
.pal-view { flex: 1; min-height: 0; display: flex; overflow: hidden; background: #333; }
.pal-list { flex: 1; min-width: 0; margin-top: -7px; padding: 0 10px 0 20px; display: flex; flex-direction: column; gap: 8px; font: 15px/21px "Open Sans", sans-serif; color: #000; }
.pal-list li { display: flex; align-items: center; flex: none; min-height: 42px; padding: 0 4px 0 8px; background: #ffa500; border: 1px solid #808080; border-radius: 7px; }
.pal-list li.clip { overflow: hidden; padding-right: 0; }
.pal-list span { flex: 1 0 auto; white-space: nowrap; }
.pal-list b { font-weight: 400; font-family: Roboto, sans-serif; flex: none; }
.pv { display: flex; align-items: center; justify-content: center; gap: 4px; width: 60px; border-radius: 4px; background: #e0e0e0; color: #333; font-size: 10px; line-height: 12px; }
.pv.blue { background: #6699cc; color: #fff; font-size: 8px; gap: 3px; }
.pv.sq { width: 35px; height: 31px; }
.h20 { height: 20px; }
.h23 { height: 23px; }
.h25 { height: 25px; }
.tiny { font-size: 8px; }
.pv.view { height: 31px; font-size: 13px; margin-right: -4px; }
.pv.nav { width: 45px; height: 32px; color: #222; border-radius: 4px 0 0 4px; margin-left: 3px; }
.pv.ext { width: 47px; height: 32px; background: #808080; color: #eee; border: 1px dashed #c33; display: block; overflow: hidden; font-size: 6px; line-height: 7px; }
.pv.ext em { display: block; white-space: nowrap; }
.dlg { width: 30px; height: 30px; margin-right: 1px; }
.dlg.cut { margin-left: 8px; }
.pv.ok { width: 30px; height: 20px; background: #4dabf5; border-radius: 2px; }
.inp { width: 60px; display: block; font-size: 9px; line-height: 12px; color: #2f86c8; }
.inp em { display: block; }
.inp u { display: flex; justify-content: space-between; align-items: center; height: 20px; border-bottom: 1px solid #4dabf5; text-decoration: none; font-size: 13px; color: #b5a273; }
.spin { width: 11px; height: 13px; }
.inp.two { width: 30px; font-size: 7px; color: #a98b4a; }
.inp.two u { height: 16px; font-size: 10px; color: #4a90c0; border-color: #c09030; }
.tog { display: flex; align-items: center; width: 60px; justify-content: space-between; font-size: 9px; color: #a0802c; }
.tog i { width: 22px; height: 9px; border-radius: 5px; background: #265a80; display: flex; justify-content: flex-end; align-items: center; }
.tog i::after { content: ""; width: 12px; height: 12px; border-radius: 6px; background: #4dabf5; }
.duo { display: flex; width: 60px; border-radius: 4px; overflow: hidden; font-size: 10px; background: #e0e0e0; color: #222; }
.duo i { flex: 1; display: grid; place-items: center; line-height: 12px; }
.duo .on { background: #4dabf5; }
.pal-bar i { height: 312px; margin-top: 247px; }
.pal-hbar i { width: 215px; }
.ring { position: absolute; left: 0; bottom: 43px; width: 252px; height: 90px; z-index: 2; overflow: visible; }
.ring path, .stroke-mark path { fill: none; stroke: #e6192d; stroke-width: 5; stroke-linecap: round; stroke-linejoin: round; }

/* centre */
.center { flex: 1; min-width: 0; display: flex; flex-direction: column; background: #121212; padding-bottom: 6px; }
.tabs { display: flex; height: 46px; flex: none; align-items: center; padding-right: 5px; }
.tab { display: flex; align-items: center; height: 40px; margin-top: -6px; margin-right: 30px; font-weight: 500; }
.tab > svg { width: 24px; height: 18px; }
.tab > .i24 { height: 24px; }
.tab a { padding: 0 9px 0 8px; }
.tab .ic { width: 18px; }
.dim { color: #999; }
.pale { color: #e6e6e6; }
.tab-run { width: 36px; color: #0a8a0a; margin-top: 4px; }
.tab-layer { width: 30px; margin-right: 14px; }
.tab-more { margin-left: auto; margin-top: 4px; }
.stage { flex: 1; min-height: 0; display: flex; }
.rail { width: 56px; flex: none; display: flex; flex-direction: column; background: #0b1c22; }
.rail-head { width: 56px; height: 49px; border-bottom: 1px solid #182c34; }
.rail-body { flex: 1; min-height: 0; display: flex; overflow: hidden; }
.rail-list { flex: 1; padding-top: 8px; color: #6f777a; }
.rail-list li { height: 48px; display: flex; align-items: center; justify-content: center; padding-left: 8px; }
.rail-list .gap { margin-bottom: 7px; }
.rail-list .t60 { height: 60px; }
.rail-list .t84 { height: 84px; }
.rail-list .t36 { height: 36px; }
.letter { font: 16px "Open Sans", sans-serif; }
.grey { color: #777; }
.rail-bar { background: #5f5f5f; }
.rail-bar i { background: #2f2f2f; height: 402px; }
.page { flex: 1; min-width: 0; display: flex; flex-direction: column; background: #021d2b; }
.page-head { height: 48px; flex: none; display: flex; align-items: center; gap: 70px; padding-left: 22px; background: #104860; color: #666; }
.page-head h1 { font: 19px "Open Sans", sans-serif; }
.canvas { flex: 1; position: relative; }
.widget { position: absolute; left: 12px; top: 25px; width: 304px; height: 58px; border: 1px dashed #0a4a8a; padding: 1px; }
.tag { position: absolute; left: 1px; top: -13px; height: 12px; display: flex; align-items: center; gap: 2px; padding: 0 3px; border-radius: 2px 2px 0 0; background: #0060c0; font: bold 10px "Liberation Sans", sans-serif; }
.w-box { height: 54px; display: flex; align-items: center; padding: 0 6px 0 13px; border: 1px solid #52626b; border-radius: 4px; color: #808e95; font-size: 16px; }
.w-box select { flex: 1; }
.c { position: absolute; width: 7px; height: 7px; background: #07498f; }
.tl { left: -1px; top: -1px; } .tr { right: -1px; top: -1px; }
.bl { left: -1px; bottom: -1px; } .br { right: -1px; bottom: -1px; }
.limit { position: absolute; left: 0; right: 0; bottom: 71px; border-top: 1px dashed #b8b8b8; }
.stage-hbar i { width: 81%; }

/* attributes */
.attrs { width: 577px; flex: none; display: flex; flex-direction: column; background: #121212; padding: 8px 8px 0; }
.attr-head { height: 34px; }
.attr-head h2, .attr-head > svg { margin-bottom: 2px; }
.attr-head .ic { padding-top: 6px; }
.attr-head .ic:last-child { padding-top: 0; }
.atabs { display: flex; height: 48px; flex: none; font-weight: 500; }
.atabs button { padding: 6px 17px 0; border-bottom: 2px solid transparent; }
.atabs .sel { color: #4dabf5; border-color: #4dabf5; }
.info { display: flex; height: 39px; flex: none; font: 12px/20px "Open Sans", sans-serif; }
.info .chip { margin-top: 12px; }
.info-id { font-size: 15px; padding: 0 9px 0 4px; }
.info-type { display: flex; flex-direction: column; font-style: italic; }
.attr-view { flex: 1; min-height: 0; display: flex; overflow: hidden; }
.groups { flex: 1; min-width: 0; }
.group { margin-bottom: 10px; padding-bottom: 3px; background: #333; border-radius: 4px; }
.group.first { margin-top: -15px; }
.g-head { display: flex; align-items: center; height: 31px; padding: 0 2px 2px 2px; font-family: "Open Sans", sans-serif; }
.g-head h3 { flex: 1; font-size: 15px; padding-top: 2px; }
.g-head .ic { width: 24px; height: 24px; }
.g-head .cb { margin: 0 2px; }
.row { position: relative; display: grid; grid-template-columns: 170px 24px 1fr; padding: 0 3px; }
.row label { align-self: center; padding-top: 5px; font: 12px/16px "Open Sans", sans-serif; }
.lk { display: grid; place-items: center; padding-bottom: 3px; }
.r23 { height: 23px; } .r25 { height: 25px; } .r28 { height: 28px; } .r30 { height: 30px; }
.r32 { height: 32px; } .r34 { height: 34px; } .r43 { height: 43px; } .r44 { height: 44px; } .r55 { height: 55px; }
.field { display: flex; align-items: center; min-width: 0; font-size: 13px; }
.field input[type=text], .field select { flex: 1; min-width: 0; height: 100%; }
.field select { padding-top: 2px; }
.tick { padding-bottom: 3px; }
.line { border-bottom: 1px solid #c4c4c4; }
.field .line { display: flex; align-self: stretch; flex: 1; }
.field > svg { margin-right: 2px; }
.stacked .field { height: 35px; }
.stacked p { font: italic 12px/20px "Open Sans", sans-serif; }
.stacked .dots { margin-left: -4px; padding-left: 4px; }
.dots { width: 32px; color: #4dabf5; font-size: 14px; }
.cb { appearance: none; width: 12px; height: 12px; margin: 0 2px; border: 1px solid #fff; border-radius: 1px; flex: none; display: grid; place-items: center; }
.cb:checked { background: #4dabf5; border-color: #4dabf5; }
.cb:checked::after { content: ""; width: 7px; height: 4px; border: solid #222; border-width: 0 0 1px 1px; transform: rotate(-45deg); }
.count { gap: 8px; padding-left: 5px; }
.count input[type=range] { appearance: none; flex: 1; height: 24px; margin-top: 4px; background: linear-gradient(to right, #4dabf5 20%, #3d627e 20%) center / 100% 2px no-repeat; }
.count input[type=range]::-webkit-slider-thumb { appearance: none; width: 12px; height: 12px; border-radius: 6px; background: #4dabf5; }
.field.count .line { flex: none; width: 49px; }
.field.count .line input { padding-bottom: 3px; }
.gen { height: 36px; margin: 4px 0; border: 1px solid #3d7099; border-radius: 4px; color: #4dabf5; }
.color { gap: 8px; }
.swatch { width: 48px; height: 26px; border: 1px dashed #ccc; margin-top: 2px; }
.sym { padding-bottom: 9px; }
.sym .dots { width: 64px; }
.attr-bar i { height: 414px; margin-top: 50px; }
.mark { position: absolute; height: 5px; border-radius: 2px; background: #e6192d; }
.m-value { left: 136px; top: 10px; width: 25px; }
.m-text { left: 151px; top: 12px; width: 20px; }
.m-count { right: 33px; top: 22px; width: 36px; }
.stroke-mark { position: absolute; left: 6px; top: 35px; width: 80px; height: 16px; }
```
